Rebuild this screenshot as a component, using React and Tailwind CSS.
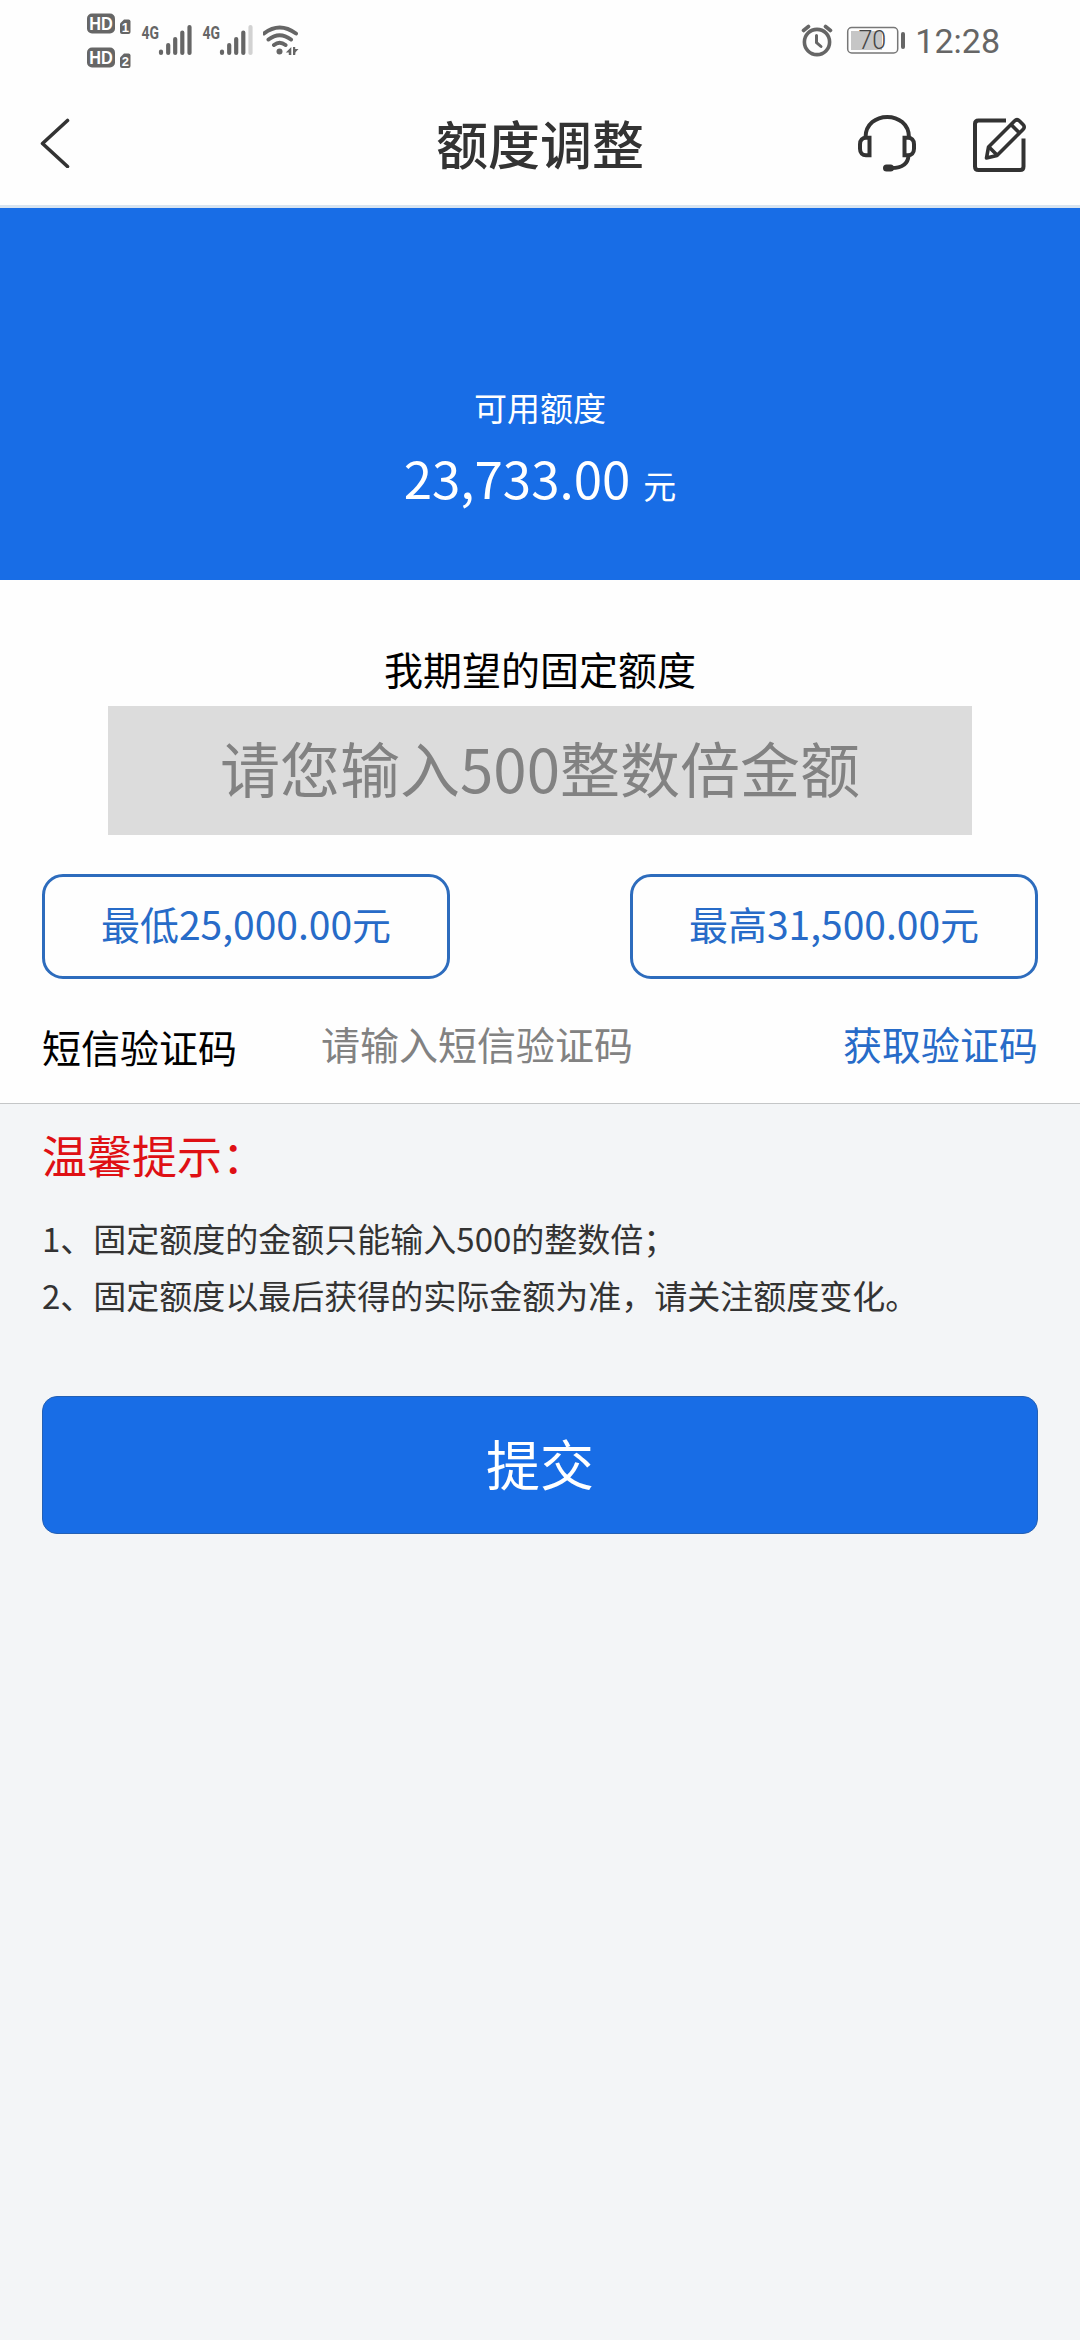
import React, { useState } from 'react';

const SimBadge = ({ y, label }) => (
    <g>
        <rect x="87" y={y} width="28" height="20" rx="5" fill="#666" />
        <text x="101" y={y + 16.2} textAnchor="middle" fontSize="18" fontWeight="700" fill="#fff" textLength="23.500" lengthAdjust="spacingAndGlyphs">HD</text>
        <path d={`M124 ${y + 6}h4.500q2 0 2 2v10.500q0 2 -2 2h-6.500q-2 0 -2 -2v-8.500z`} fill="#666" />
        <text x="125.300" y={y + 18.3} textAnchor="middle" fontSize="13" fontWeight="700" fill="#fff">{label}</text>
    </g>
);

const Signal = ({ lastBar }) => (
    <svg className="h-[40px] w-[52px]" viewBox="141 20 52 40" fontFamily="Roboto, sans-serif">
        <text x="141.500" y="38.500" fontSize="19" fontWeight="700" fill="#666" textLength="17.500" lengthAdjust="spacingAndGlyphs">4G</text>
        <g stroke="#666" strokeWidth="4.200" strokeLinecap="round">
            <path d="M161 51.500v1.500M168.200 45v8M175.200 39v14M182.300 32.500v20.500" />
            <path d="M189.500 27v26" stroke={lastBar} />
        </g>
    </svg>
);

const StatusBar = () => (
    <div className="flex h-[80px] items-start justify-between pl-[86px] pr-[80px] font-['Roboto',sans-serif]">
        <div className="flex">
            <svg className="mt-3 h-[58px] w-[46px]" viewBox="86 12 46 58" fontFamily="'Liberation Sans', sans-serif">
                <SimBadge y={13.5} label="1" />
                <SimBadge y={47.5} label="2" />
            </svg>
            <div className="mt-5 ml-[9px] flex gap-[9px]">
                <Signal lastBar="#666" />
                <Signal lastBar="#d2d2d2" />
                <svg className="h-[40px] w-[40px]" viewBox="263 20 40 40" fill="none" stroke="#666" strokeWidth="4" strokeLinecap="round">
                    <path d="M264 33.500q15.500 -12 32 0M268.500 39.500q11 -8.500 22.500 0M274 45q5.500 -4.500 11.500 0" />
                    <circle cx="279.500" cy="51.500" r="3" fill="#666" stroke="none" />
                    <path d="M291.300 47v8h-2.500v-2.600h-3zM293 47v8h2.200l.3 -2.800 3 -3.200h-3.300v-2z" fill="#666" stroke="none" />
                </svg>
            </div>
        </div>
        <div className="flex pt-5">
            <svg className="h-[40px] w-[32px]" viewBox="801 20 32 40" fill="none" stroke="#666" strokeWidth="3.600" strokeLinecap="round">
                <circle cx="817" cy="42" r="12.600" />
                <path d="M803.500 30.500l5 -4M830.500 30.500l-5 -4" />
                <path d="M816.500 35.500v7l4.500 4" strokeWidth="3" />
            </svg>
            <svg className="ml-[13px] h-[40px] w-[60px]" viewBox="846 20 60 40">
                <rect x="847.700" y="27.500" width="50" height="25.500" rx="4" fill="none" stroke="#777" strokeWidth="1.500" />
                <rect x="851" y="31" width="31" height="19" fill="#c6c6c6" />
                <rect x="901" y="32" width="4" height="17" rx="2" fill="#666" />
                <text x="858.500" y="48.800" fontSize="25" fontWeight="300" fill="#444">70</text>
            </svg>
            <span className="ml-[9px] text-[34px] leading-[43px] text-[#666]">12:28</span>
        </div>
    </div>
);

const Header = () => (
    <header className="flex h-[128px] items-center border-b-[3px] border-[#d8e4f0] pr-[52px] pl-[40px]">
        <button type="button" className="w-[270px]">
            <svg className="h-[50px] w-[32px]" viewBox="40 118 32 50" fill="none" stroke="#333" strokeWidth="3.600" strokeLinecap="round" strokeLinejoin="round">
                <path d="M67.500 120.500L42.500 143.500L67.500 166.500" />
            </svg>
        </button>
        <h1 className="flex-1 pl-[42px] text-center text-[52px] leading-[60px] font-medium text-[#333]">额度调整</h1>
        <div className="flex w-[300px] justify-end gap-[55px]">
            <svg className="h-[60px] w-[60px]" viewBox="857 113.500 60 60" fill="none" stroke="#333" strokeWidth="4">
                <path d="M865.500 138C865.500 110.500 909 110.500 909 138" />
                <path d="M869.500 138.200v17.600h-3.500c-3.500 0 -6 -2.500 -6 -6.500v-4.600c0 -4 2.500 -6.500 6 -6.500z" />
                <path d="M904.500 138.200v17.600h3.500c3.500 0 6 -2.500 6 -6.500v-4.600c0 -4 -2.500 -6.500 -6 -6.500z" />
                <path d="M908.500 156c-.5 8.500 -6 12.500 -17 12.500" />
                <rect x="883" y="165" width="11" height="7" rx="3.500" fill="#333" stroke="none" />
            </svg>
            <svg className="h-[60px] w-[56px]" viewBox="972 113.500 56 60" fill="none" stroke="#333" strokeWidth="4" strokeLinejoin="round">
                <path d="M1006 121H978.500q-3.500 0 -3.500 3.500V167q0 3.500 3.500 3.500H1020q3.500 0 3.500 -3.500V139" />
                <path d="M986.500 158.500L988.500 147.500L1014.500 121.500q2.500 -2.500 5 0l3.500 3.500q2.500 2.500 0 5L997 156z" strokeWidth="3.600" />
                <path d="M989 147.500l8.500 8.500M1011.500 125.500l8.500 8.500" strokeWidth="3.600" />
            </svg>
        </div>
    </header>
);

const tips = [
    '1、固定额度的金额只能输入500的整数倍；',
    '2、固定额度以最后获得的实际金额为准，请关注额度变化。',
];

const App = () => {
    const [amount, setAmount] = useState('');
    const [code, setCode] = useState('');

    return (
        <div className="min-h-[2340px] w-[1080px] bg-[#f3f5f7] font-['Noto_Sans_CJK_SC',sans-serif]" lang="zh-CN">
            <div className="bg-[#fefefe]">
                <StatusBar />
                <Header />
            </div>

            {/* 可用额度 */}
            <section className="flex h-[372px] flex-col items-center bg-[#186de6] pt-[175px] text-white">
                <p className="text-[33px] leading-[48px]">可用额度</p>
                <p className="mt-4 text-[51px] leading-[60px]">
                    23,733.00<span className="ml-[13px] text-[33px]">元</span>
                </p>
            </section>

            <section className="border-b border-[#c4c6c7] bg-[#fefefe] pt-[60px]">
                <p className="text-center text-[39px] leading-[56px] text-black">我期望的固定额度</p>
                <input
                    type="text"
                    value={amount}
                    onChange={(e) => setAmount(e.target.value)}
                    placeholder="请您输入500整数倍金额"
                    className="mx-auto mt-[10px] block h-[129px] w-4/5 bg-[#dcdcdc] pb-[8px] text-center text-[60px] placeholder:text-[#828282] focus:outline-none"
                />
                <div className="mt-[39px] flex justify-between px-[42px] text-[39px] text-[#276bc8]">
                    <button type="button" onClick={() => setAmount('25000')} className="h-[105px] w-[408px] rounded-[21px] border-[3px] border-[#2d6cbd] pb-[6px]">
                        最低25,000.00元
                    </button>
                    <button type="button" onClick={() => setAmount('31500')} className="h-[105px] w-[408px] rounded-[21px] border-[3px] border-[#2d6cbd] pb-[6px]">
                        最高31,500.00元
                    </button>
                </div>
                {/* 短信验证码 */}
                <div className="flex h-[124px] items-center px-[42px] pt-1 text-[39px]">
                    <label htmlFor="code" className="w-[279px] pt-[6px] text-black">短信验证码</label>
                    <input
                        id="code"
                        type="text"
                        value={code}
                        onChange={(e) => setCode(e.target.value)}
                        placeholder="请输入短信验证码"
                        className="min-w-0 flex-1 placeholder:text-[#828282] focus:outline-none"
                    />
                    <button type="button" className="text-[#276bc8]">获取验证码</button>
                </div>
            </section>

            <section className="px-[42px] pt-[21px]">
                <h2 className="text-[45px] leading-[60px] text-[#df1014]">温馨提示：</h2>
                <ul className="mt-[25px] text-[33px] leading-[57px] text-[#333]">
                    {tips.map((tip) => (
                        <li key={tip}>{tip}</li>
                    ))}
                </ul>
                <button type="button" className="mt-[72px] h-[138px] w-full rounded-[15px] border border-[#2460b4] bg-[#186de6] pb-[6px] text-[54px] text-white">
                    提交
                </button>
            </section>
        </div>
    );
};

export default App;
